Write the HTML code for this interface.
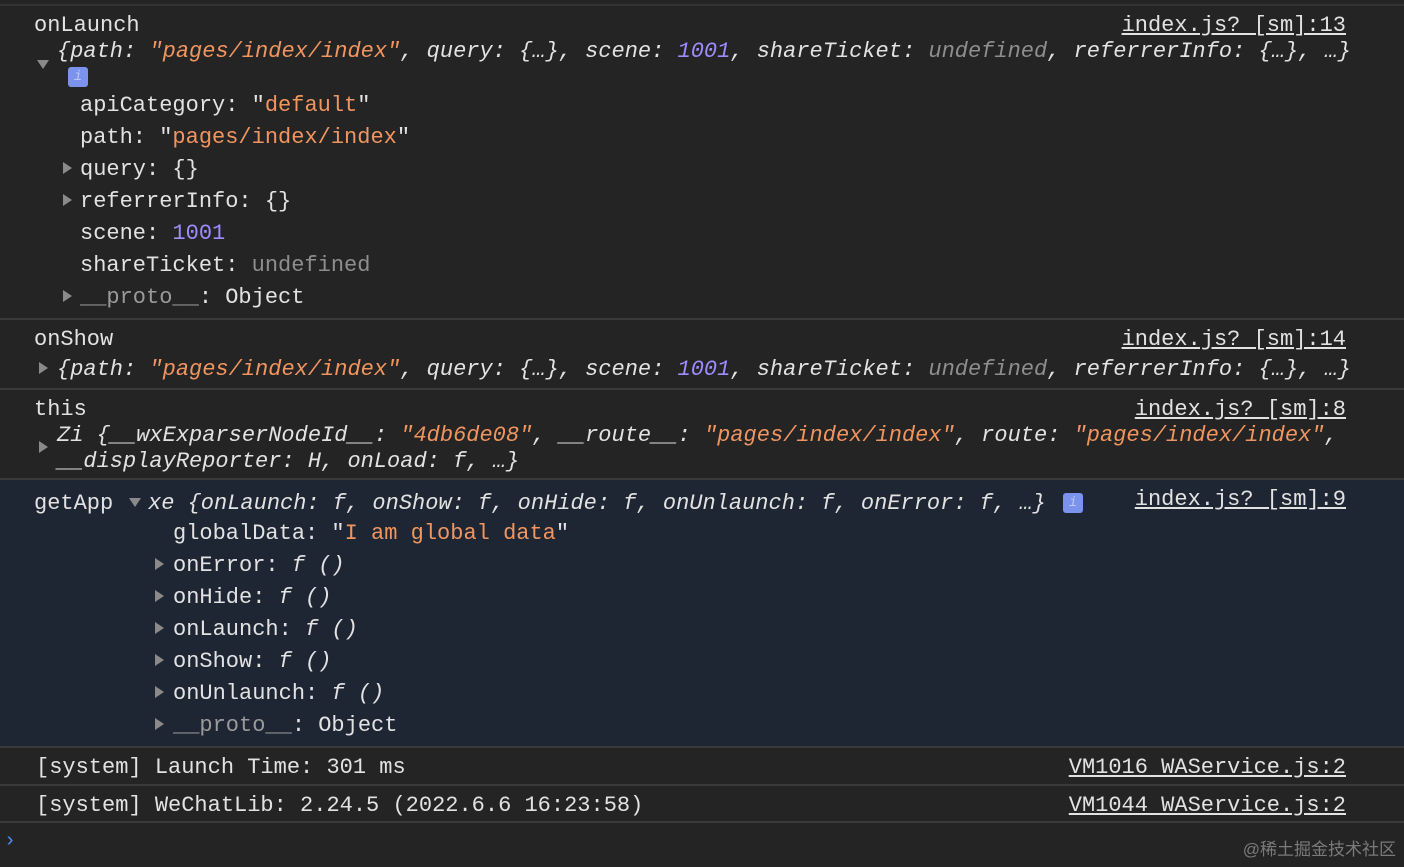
<!DOCTYPE html>
<html><head><meta charset="utf-8"><style>
html,body{margin:0;padding:0;}
body{width:1404px;height:867px;background:#242424;position:relative;overflow:hidden;font-family:"Liberation Mono",monospace;font-size:22px;color:#e2e2e2;}
.l{position:absolute;height:32px;line-height:32px;white-space:pre;margin-top:2px;}
.i{font-style:italic;}
.s{color:#f0955f;}
.n{color:#9d8cff;}
.u{color:#8e8e8e;}
.g{color:#9a9a9a;}
.r{position:absolute;right:58px;height:32px;line-height:32px;white-space:pre;text-decoration:underline;color:#e2e2e2;margin-top:2px;}
.sep{position:absolute;left:0;width:1404px;height:2px;background:#3a3a3a;}
.tri{position:absolute;width:0;height:0;}
.tr{border-top:6px solid transparent;border-bottom:6px solid transparent;border-left:9px solid #8a8a8a;}
.td{border-left:6px solid transparent;border-right:6px solid transparent;border-top:9px solid #8a8a8a;}
.info{position:absolute;width:20px;height:20px;background:#7c93ee;border-radius:3px;color:#b9c7f7;font-size:14px;line-height:20px;text-align:center;font-style:italic;}
</style></head><body>
<div class="sep" style="top:4px;background:#333"></div>
<div class="l" style="left:34px;top:8px">onLaunch</div>
<div class="r" style="top:8px">index.js? [sm]:13</div>
<div class="l i" style="left:57px;top:34px">{path: <span class="s">"pages/index/index"</span>, query: {…}, scene: <span class="n">1001</span>, shareTicket: <span class="u">undefined</span>, referrerInfo: {…}, …}</div>
<div class="tri td" style="left:37px;top:60px"></div>
<div class="info" style="left:68px;top:67px">i</div>
<div class="l" style="left:80px;top:88px">apiCategory: "<span class="s">default</span>"</div>
<div class="l" style="left:80px;top:120px">path: "<span class="s">pages/index/index</span>"</div>
<div class="tri tr" style="left:63px;top:162px"></div>
<div class="l" style="left:80px;top:152px">query: {}</div>
<div class="tri tr" style="left:63px;top:194px"></div>
<div class="l" style="left:80px;top:184px">referrerInfo: {}</div>
<div class="l" style="left:80px;top:216px">scene: <span class="n">1001</span></div>
<div class="l" style="left:80px;top:248px">shareTicket: <span class="u">undefined</span></div>
<div class="tri tr" style="left:63px;top:290px"></div>
<div class="l" style="left:80px;top:280px"><span class="g">__proto__</span>: Object</div>
<div class="sep" style="top:318px"></div>

<div class="l" style="left:34px;top:322px">onShow</div>
<div class="r" style="top:322px">index.js? [sm]:14</div>
<div class="tri tr" style="left:39px;top:362px"></div>
<div class="l i" style="left:57px;top:352px">{path: <span class="s">"pages/index/index"</span>, query: {…}, scene: <span class="n">1001</span>, shareTicket: <span class="u">undefined</span>, referrerInfo: {…}, …}</div>
<div class="sep" style="top:388px"></div>

<div class="l" style="left:34px;top:392px">this</div>
<div class="r" style="top:392px">index.js? [sm]:8</div>
<div class="l i" style="left:57px;top:418px">Zi {__wxExparserNodeId__: <span class="s">"4db6de08"</span>, __route__: <span class="s">"pages/index/index"</span>, route: <span class="s">"pages/index/index"</span>,</div>
<div class="tri tr" style="left:39px;top:441px"></div>
<div class="l i" style="left:57px;top:444px">__displayReporter: H, onLoad: f, …}</div>
<div class="sep" style="top:478px"></div>

<div style="position:absolute;left:0;top:480px;width:1404px;height:266px;background:#1f2633"></div>
<div class="l" style="left:34px;top:486px">getApp</div>
<div class="tri td" style="left:129px;top:498px"></div>
<div class="l i" style="left:148px;top:486px">xe {onLaunch: f, onShow: f, onHide: f, onUnlaunch: f, onError: f, …}</div>
<div class="info" style="left:1063px;top:493px">i</div>
<div class="r" style="top:482px">index.js? [sm]:9</div>
<div class="l" style="left:173px;top:516px">globalData: "<span class="s">I am global data</span>"</div>
<div class="tri tr" style="left:155px;top:558px"></div>
<div class="l" style="left:173px;top:548px">onError: <span class="i">f ()</span></div>
<div class="tri tr" style="left:155px;top:590px"></div>
<div class="l" style="left:173px;top:580px">onHide: <span class="i">f ()</span></div>
<div class="tri tr" style="left:155px;top:622px"></div>
<div class="l" style="left:173px;top:612px">onLaunch: <span class="i">f ()</span></div>
<div class="tri tr" style="left:155px;top:654px"></div>
<div class="l" style="left:173px;top:644px">onShow: <span class="i">f ()</span></div>
<div class="tri tr" style="left:155px;top:686px"></div>
<div class="l" style="left:173px;top:676px">onUnlaunch: <span class="i">f ()</span></div>
<div class="tri tr" style="left:155px;top:718px"></div>
<div class="l" style="left:173px;top:708px"><span class="g">__proto__</span>: Object</div>
<div class="sep" style="top:746px"></div>

<div class="l" style="left:36px;top:750px">[system] Launch Time: 301 ms</div>
<div class="r" style="top:750px">VM1016 WAService.js:2</div>
<div class="sep" style="top:784px"></div>
<div class="l" style="left:36px;top:788px">[system] WeChatLib: 2.24.5 (2022.6.6 16:23:58)</div>
<div class="r" style="top:788px">VM1044 WAService.js:2</div>
<div class="sep" style="top:821px"></div>
<div class="l" style="left:4px;top:824px;color:#4d8df5;font-size:20px">›</div>
<div class="l" style="right:8px;top:832px;font-family:'Liberation Sans','Noto Sans CJK SC',sans-serif;font-size:17px;color:#7a7a7a">@稀土掘金技术社区</div>
</body></html>
